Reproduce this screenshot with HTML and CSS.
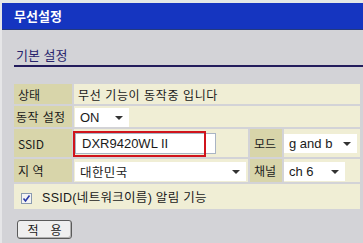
FILE: index.html
```html
<!DOCTYPE html>
<html lang="ko">
<head>
<meta charset="utf-8">
<link rel="stylesheet" href="styles.css">
</head>
<body>
<div class="topstrip"></div>
<div class="header">무선설정</div>
<div class="section">
  <div class="section-title">기본 설정</div>
  <table class="form">
    <colgroup>
      <col class="c1"><col class="c2"><col class="c3"><col class="c4">
    </colgroup>
    <tr class="r1">
      <td class="lbl">상태</td>
      <td class="val txt" colspan="3">무선 기능이 동작중 입니다</td>
    </tr>
    <tr class="r2">
      <td class="lbl lbl-tight">동작 설정</td>
      <td class="val" colspan="3"><span class="sel sel-on">ON<span class="arr"></span></span></td>
    </tr>
    <tr class="r3">
      <td class="lbl">SSID</td>
      <td class="val"><span class="inp">DXR9420WL II<span class="redbox"></span></span></td>
      <td class="lbl lbl2">모드</td>
      <td class="val v2"><span class="sel sel-mode">g and b<span class="arr"></span></span></td>
    </tr>
    <tr class="r4">
      <td class="lbl">지 역</td>
      <td class="val"><span class="sel sel-region">대한민국<span class="arr"></span></span></td>
      <td class="lbl lbl2">채널</td>
      <td class="val v2"><span class="sel sel-ch">ch 6<span class="arr"></span></span></td>
    </tr>
    <tr class="r5">
      <td class="val chk" colspan="4"><span class="cbox"><svg width="9" height="9" viewBox="0 0 9 9"><path d="M1.5 4.5 L3.5 7 L7.5 1.5" fill="none" stroke="#2a3aa8" stroke-width="1.6"/></svg></span>SSID(네트워크이름) 알림 기능</td>
    </tr>
  </table>
  <button class="btn"><span>적</span><span>용</span></button>
</div>
</body>
</html>
```
FILE: styles.css
```css
html, body {
  margin: 0;
  padding: 0;
}
body {
  background: #d3d3d7;
  font-family: "Noto Sans CJK KR", "Liberation Sans", sans-serif;
  font-size: 12px;
  color: #1a1a1a;
  width: 363px;
  height: 243px;
  overflow: hidden;
  border-left: 2px solid #e6e6e8;
  box-sizing: border-box;
}
.topstrip {
  height: 3px;
  background: #e4e8e6;
}
.header {
  height: 27px;
  background: #1535c0;
  border-bottom: 1px solid #243a80;
  box-sizing: border-box;
  color: #ffffff;
  font-weight: bold;
  font-size: 13px;
  line-height: 25px;
  padding-left: 12px;
}
.section {
  padding: 17px 0 0 12px;
}
.section-title {
  color: #28246c;
  font-size: 13px;
  line-height: 16px;
  padding-left: 2px;
  padding-bottom: 2px;
  border-bottom: 2px solid #231c5c;
}
.form {
  border-collapse: separate;
  border-spacing: 2px;
  margin-top: 15px;
  margin-left: -2px;
  width: 350px;
  table-layout: fixed;
}
.c1 { width: 58px; }
.c2 { width: 174px; }
.c3 { width: 32px; }
.c4 { width: 76px; }
.form td {
  padding: 0;
  white-space: nowrap;
  vertical-align: middle;
  overflow: visible;
}
.lbl {
  background: #d8d5aa;
}
.form td.lbl {
  padding-left: 4px;
}
.form td.lbl-tight {
  padding-left: 2px;
  letter-spacing: 0.4px;
}
.form td.lbl2 {
  padding-left: 4px;
}
.val {
  background: #f0eed5;
}
.form td.val {
  padding-left: 1px;
}
.form td.v2 {
  padding-left: 0;
}
.form td.txt {
  padding-left: 4px;
  letter-spacing: 0.6px;
}
.r1 td { height: 20px; }
.r2 td { height: 21px; }
.r3 td { height: 28px; }
.r4 td { height: 23px; }
.r5 td { height: 25px; }
.sel {
  display: inline-flex;
  align-items: center;
  position: relative;
  background: #ffffff;
  height: 19px;
  box-sizing: border-box;
  padding-left: 5px;
  font-family: "Liberation Sans", "Noto Sans CJK KR", sans-serif;
  font-size: 13px;
  vertical-align: middle;
}
.sel .arr {
  position: absolute;
  right: 6px;
  top: 8px;
  width: 0;
  height: 0;
  border-left: 4px solid transparent;
  border-right: 4px solid transparent;
  border-top: 4px solid #333;
}
.sel-on { width: 54px; }
.sel-mode { width: 73px; }
.sel-region { width: 171px; font-family: "Noto Sans CJK KR", sans-serif; font-size: 12.5px; letter-spacing: 0.4px; }
.sel-ch { width: 61px; }
.inp {
  display: inline-flex;
  align-items: center;
  position: relative;
  background: #ffffff;
  width: 141px;
  height: 21px;
  box-sizing: border-box;
  border: 1px solid #a9b4c4;
  padding-left: 6px;
  font-family: "Liberation Sans", sans-serif;
  font-size: 13px;
  vertical-align: middle;
}
.redbox {
  position: absolute;
  left: -3px;
  top: -3px;
  width: 133px;
  height: 26px;
  border: 2px solid #d0141c;
  box-sizing: border-box;
}
.form .r5 td.chk {
  padding-left: 7px;
  font-family: "Liberation Sans", "Noto Sans CJK KR", sans-serif;
  font-size: 12.5px;
  letter-spacing: 0.3px;
}
.cbox {
  display: inline-flex;
  align-items: center;
  justify-content: center;
  width: 11px;
  height: 11px;
  border: 1px solid #8a9ab0;
  background: #f4f4f4;
  box-sizing: border-box;
  margin-right: 10px;
  vertical-align: -1px;
}
.btn {
  display: flex;
  align-items: center;
  justify-content: center;
  gap: 12px;
  margin-top: 9px;
  margin-left: 3px;
  width: 55px;
  height: 19px;
  background: #efefef;
  border: 1px solid #5a5a5a;
  border-radius: 3px;
  box-shadow: inset -1px -1px 0 #b0b0b0;
  font-family: "Noto Sans CJK KR", sans-serif;
  font-size: 12px;
  color: #1a1a1a;
  padding: 0;
}
```
